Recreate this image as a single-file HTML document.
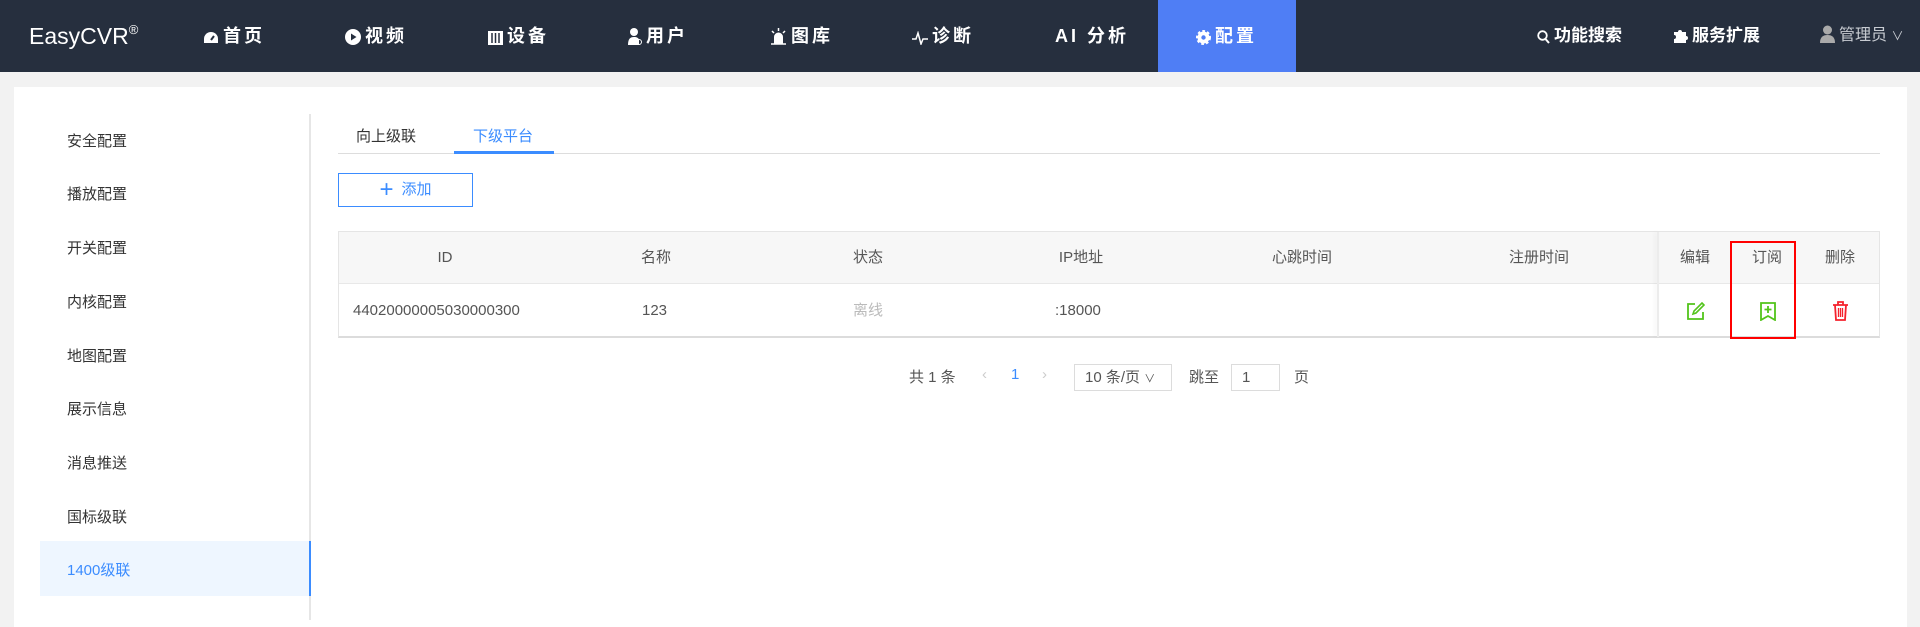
<!DOCTYPE html>
<html><head><meta charset="utf-8"><style>
*{margin:0;padding:0;box-sizing:border-box}
body{width:1920px;height:620px;background:#f2f2f2;font-family:"Liberation Sans","Noto Sans CJK SC",sans-serif;position:relative;overflow:hidden;color:#333}
.nav{position:absolute;left:0;top:0;width:1920px;height:72px;background:#262f3e;color:#fff}
.a{position:absolute;top:0;height:72px;line-height:72px;font-size:18px;font-weight:bold;white-space:nowrap;letter-spacing:3px}
.a svg{vertical-align:-3px;margin-right:4px}
.panel{position:absolute;left:14px;top:87px;width:1893px;height:540px;background:#fff}
.abs{position:absolute;white-space:nowrap}
.side{font-size:15px;color:#333}
.th{position:absolute;top:231px;height:53px;line-height:53px;font-size:15px;color:#555;transform:translateX(-50%)}
.td{position:absolute;top:298px;line-height:26px;font-size:15px;color:#555}
</style></head><body>
<div class="nav">
 <div class="a" style="left:29px;font-weight:normal;font-size:23px;letter-spacing:0">EasyCVR<span style="font-size:13px;position:relative;top:-10px">®</span></div>
 <div class="a" style="left:203px"><svg width="16" height="14" viewBox="0 0 16 14"><path d="M8 1a7 7 0 0 0-7 7v4h14V8a7 7 0 0 0-7-7z" fill="#fff"/><path d="M8 9l3-4" stroke="#262f3e" stroke-width="2"/></svg>首页</div>
 <div class="a" style="left:345px"><svg width="16" height="16"><circle cx="8" cy="8" r="8" fill="#fff"/><path d="M6 4.5v7l5.5-3.5z" fill="#262f3e"/></svg>视频</div>
 <div class="a" style="left:488px"><svg width="15" height="14"><rect x="0" y="0" width="15" height="14" fill="#fff"/><path d="M4 2v10M7.5 2v10M11 2v10" stroke="#262f3e" stroke-width="1.5"/></svg>设备</div>
 <div class="a" style="left:628px"><svg width="14" height="17"><circle cx="6" cy="4" r="4" fill="#fff"/><path d="M0 17c0-6 2-8 6-8s5 2 5 3v5z" fill="#fff"/><circle cx="11" cy="14" r="2.5" fill="none" stroke="#fff"/></svg>用户</div>
 <div class="a" style="left:770px"><svg width="17" height="17"><path d="M4 16V9a4.5 4.5 0 0 1 9 0v7z" fill="#fff"/><path d="M1 16h15M8.5 0v3M2 3l2 2M15 3l-2 2" stroke="#fff" stroke-width="1.5"/></svg>图库</div>
 <div class="a" style="left:912px"><svg width="16" height="14"><path d="M0 8h4l2-6 3 11 2-5h5" fill="none" stroke="#fff" stroke-width="1.5"/></svg>诊断</div>
 <div class="a" style="left:1055px">AI 分析</div>
 <div style="position:absolute;left:1158px;top:0;width:138px;height:72px;background:#4f7ef5"></div>
 <div class="a" style="left:1196px"><svg width="15" height="15"><circle cx="7.5" cy="7.5" r="6" fill="#fff" stroke="#fff" stroke-width="3" stroke-dasharray="2.5 2"/><circle cx="7.5" cy="7.5" r="2.2" fill="#4f7ef5"/></svg>配置</div>
 <div class="a" style="left:1537px;font-size:17px;letter-spacing:0"><svg width="13" height="14"><circle cx="5.5" cy="5.5" r="4.3" fill="none" stroke="#fff" stroke-width="1.8"/><path d="M8.5 9l3.5 4" stroke="#fff" stroke-width="2"/></svg>功能搜索</div>
 <div class="a" style="left:1672px;font-size:17px;letter-spacing:0"><svg width="16" height="16"><path d="M2 4h4a2 2 0 1 1 4 0h4v4a2 2 0 1 1 0 4v3H2v-4a2 2 0 1 0 0-4z" fill="#fff"/></svg>服务扩展</div>
 <div class="a" style="left:1820px;font-weight:normal;font-size:16px;color:#c8ccd2;letter-spacing:0"><svg width="15" height="18"><circle cx="7.5" cy="5" r="4.5" fill="#aaa"/><path d="M0 18c0-6 3-8 7.5-8S15 12 15 18z" fill="#aaa"/></svg>管理员 <span style="font-size:12px">∨</span></div>
</div>
<div class="panel"></div>
<div class="abs" style="left:309px;top:114px;width:2px;height:506px;background:#e6e6e6"></div>
<div class="abs" style="left:40px;top:541px;width:271px;height:55px;background:#eef6ff;border-right:2px solid #3b8cff"></div>
<div class="abs side" style="left:67px;top:130px">安全配置</div>
<div class="abs side" style="left:67px;top:183px">播放配置</div>
<div class="abs side" style="left:67px;top:237px">开关配置</div>
<div class="abs side" style="left:67px;top:291px">内核配置</div>
<div class="abs side" style="left:67px;top:345px">地图配置</div>
<div class="abs side" style="left:67px;top:398px">展示信息</div>
<div class="abs side" style="left:67px;top:452px">消息推送</div>
<div class="abs side" style="left:67px;top:506px">国标级联</div>
<div class="abs side" style="left:67px;top:559px;color:#3b8cff">1400级联</div>
<div class="abs" style="left:356px;top:125px;font-size:15px;color:#333">向上级联</div>
<div class="abs" style="left:473px;top:125px;font-size:15px;color:#3b8cff">下级平台</div>
<div class="abs" style="left:338px;top:153px;width:1542px;height:1px;background:#ddd"></div>
<div class="abs" style="left:454px;top:151px;width:100px;height:3px;background:#3b8cff"></div>
<div class="abs" style="left:338px;top:173px;width:135px;height:34px;border:1px solid #3b8cff;color:#3b8cff;font-size:15px;line-height:32px;text-align:center"><span style="font-size:24px;vertical-align:-3px;margin-right:8px">+</span>添加</div>
<div class="abs" style="left:338px;top:231px;width:1542px;height:107px;border:1px solid #e5e5e5;border-bottom:2px solid #dcdcdc"></div>
<div class="abs" style="left:339px;top:232px;width:1540px;height:52px;background:#f7f7f7;border-bottom:1px solid #e8e8e8"></div>
<div class="abs" style="left:1657px;top:232px;width:2px;height:105px;background:#ececec;box-shadow:-2px 0 4px rgba(0,0,0,.06)"></div>
<div class="th" style="left:445px">ID</div>
<div class="th" style="left:656px">名称</div>
<div class="th" style="left:868px">状态</div>
<div class="th" style="left:1081px">IP地址</div>
<div class="th" style="left:1302px">心跳时间</div>
<div class="th" style="left:1539px">注册时间</div>
<div class="th" style="left:1695px">编辑</div>
<div class="th" style="left:1767px">订阅</div>
<div class="th" style="left:1840px">删除</div>
<div class="td" style="left:353px">44020000005030000300</div>
<div class="td" style="left:642px">123</div>
<div class="td" style="left:853px;color:#bbb">离线</div>
<div class="td" style="left:1055px">:18000</div>
<svg class="abs" style="left:1686px;top:302px" width="19" height="19" viewBox="0 0 19 19"><path d="M9 2H2v15h15v-7" fill="none" stroke="#52c41a" stroke-width="1.8"/><path d="M7 12l1-3 8-8 2 2-8 8z" fill="none" stroke="#52c41a" stroke-width="1.6"/></svg>
<svg class="abs" style="left:1760px;top:302px" width="16" height="19" viewBox="0 0 16 19"><path d="M1 1h14v17l-7-4-7 4z" fill="none" stroke="#52c41a" stroke-width="1.8"/><path d="M8 4v7M4.5 7.5h7" stroke="#52c41a" stroke-width="1.8"/></svg>
<svg class="abs" style="left:1832px;top:301px" width="17" height="20" viewBox="0 0 17 20"><path d="M1 4h15M6 4V1h5v3M3 4l1 15h9l1-15" fill="none" stroke="#f5222d" stroke-width="1.8"/><path d="M6.5 7v9M8.5 7v9M10.5 7v9" stroke="#f5222d" stroke-width="1.3"/></svg>
<div class="abs" style="left:1730px;top:241px;width:66px;height:98px;border:2px solid #f00"></div>
<div class="abs" style="left:909px;top:366px;font-size:15px;color:#555">共 1 条</div>
<div class="abs" style="left:982px;top:366px;font-size:15px;color:#ccc">‹</div>
<div class="abs" style="left:1011px;top:366px;font-size:15px;color:#3b8cff">1</div>
<div class="abs" style="left:1042px;top:366px;font-size:15px;color:#ccc">›</div>
<div class="abs" style="left:1074px;top:364px;width:98px;height:27px;border:1px solid #dcdcdc;font-size:15px;line-height:25px;padding-left:10px;color:#555">10 条/页 <span style="font-size:11px">∨</span></div>
<div class="abs" style="left:1189px;top:366px;font-size:15px;color:#555">跳至</div>
<div class="abs" style="left:1231px;top:364px;width:49px;height:27px;border:1px solid #dcdcdc;font-size:15px;line-height:25px;padding-left:10px;color:#555">1</div>
<div class="abs" style="left:1294px;top:366px;font-size:15px;color:#555">页</div>
</body></html>
